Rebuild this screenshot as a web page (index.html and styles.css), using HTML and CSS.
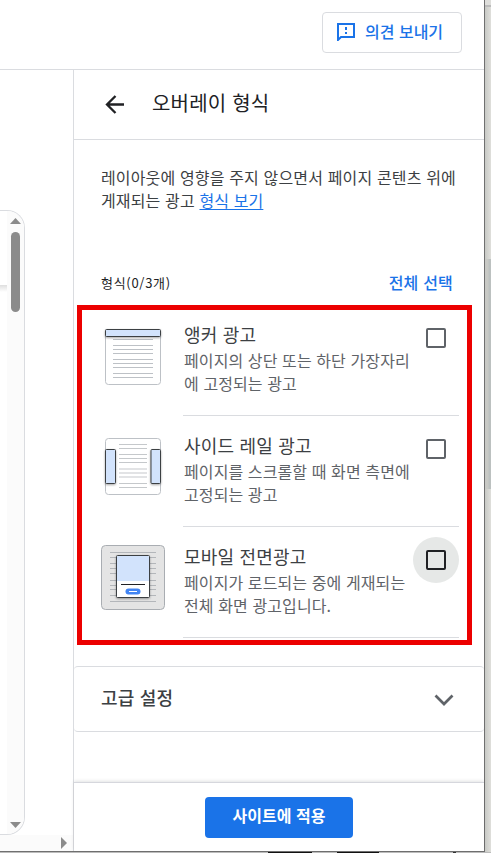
FILE: index.html
```html
<!DOCTYPE html>
<html lang="ko">
<head>
<meta charset="utf-8">
<title>오버레이 형식</title>
<link rel="stylesheet" href="styles.css">
</head>
<body>
<div class="screen">
  <div class="window">
    <header class="topbar">
      <button class="feedback">
        <svg width="18" height="18" viewBox="0 0 18 18"><path d="M1 17V1h16v13H4z" fill="none" stroke="#1a73e8" stroke-width="2"/><path d="M8 4h2v3H8zM8 9h2v2H8z" fill="#1a73e8"/></svg>
        <span>의견 보내기</span>
      </button>
    </header>
    <div class="main">
      <aside class="preview">
        <div class="preview-frame">
          <div class="page"><div class="page-bar"></div></div>
          <div class="scroll">
            <svg width="11" height="6" viewBox="0 0 11 6"><path d="M0 6 5.500 0 11 6z" fill="#8b8b8b"/></svg>
            <div class="thumb"></div>
            <svg class="down" width="11" height="6" viewBox="0 0 11 6"><path d="M0 0h11L5.500 6z" fill="#8b8b8b"/></svg>
          </div>
        </div>
        <div class="hscroll"><svg width="6" height="12" viewBox="0 0 6 12"><path d="M0 0l6 6-6 6z" fill="#8b8b8b"/></svg></div>
      </aside>
      <section class="panel">
        <div class="panel-head">
          <svg width="20" height="20" viewBox="0 0 20 20"><path d="M19 9.500H2M10.500 1 2 9.500l8.500 8.500" fill="none" stroke="#202124" stroke-width="2.300"/></svg>
          <h1>오버레이 형식</h1>
        </div>
        <p class="intro">레이아웃에 영향을 주지 않으면서 페이지 콘텐츠 위에<br>게재되는 광고 <a href="#">형식 보기</a></p>
        <div class="list-head"><span class="count">형식(0/3개)</span><span class="select-all">전체 선택</span></div>
        <div class="formats">
          <div class="format">
            <svg class="art" width="64" height="66" viewBox="0 0 64 66">
              <rect x="4.500" y="4.500" width="55" height="55" rx="3" fill="#fff" stroke="#bdc1c6"/>
              <path d="M12 14.500h40M12 20.500h40M12 24.500h40M12 28.500h40M12 34.500h40M12 38.500h40M12 42.500h40M12 48.500h40M12 52.500h40" stroke="#bdc1c6"/>
              <rect class="lift" x="4.500" y="4.500" width="55" height="7" rx="1" fill="#d2e3fc" stroke="#3c4043"/>
            </svg>
            <div class="copy"><h2>앵커 광고</h2><p>페이지의 상단 또는 하단 가장자리<br>에 고정되는 광고</p></div>
            <span class="state"><span class="box"></span></span>
          </div>
          <div class="format">
            <svg class="art" width="64" height="66" viewBox="0 0 64 66">
              <rect x="4.500" y="3.500" width="55" height="56" rx="3" fill="#fff" stroke="#bdc1c6"/>
              <path d="M18 9.500h28M18 13.500h28M18 19.500h28M18 23.500h28M18 27.500h28M18 34h28M18 38h28M18 42h28M18 48.500h28M18 52.500h28" stroke="#c5c8cb" stroke-width="1.200"/>
              <rect class="lift" x="4.500" y="14.500" width="10" height="34" rx="1" fill="#d2e3fc" stroke="#3c4043"/>
              <rect class="lift" x="50" y="14.500" width="9.500" height="34" rx="1" fill="#d2e3fc" stroke="#3c4043"/>
            </svg>
            <div class="copy"><h2>사이드 레일 광고</h2><p>페이지를 스크롤할 때 화면 측면에<br>고정되는 광고</p></div>
            <span class="state"><span class="box"></span></span>
          </div>
          <div class="format">
            <svg class="art" width="64" height="66" viewBox="0 0 64 66">
              <rect x=".5" y=".5" width="63" height="64" rx="4" fill="#e4e4e4" stroke="#a9adb2"/>
              <path d="M9 7.500h46M9 12.500h46M9 18.500h46M9 23.500h46M9 28.500h46M9 35.500h46M9 40.500h46M9 44.500h46M9 50.500h46M9 56.500h46" stroke="#b3b6ba"/>
              <rect class="lift" x="15.500" y="10.500" width="33" height="42" rx="1" fill="#fff" stroke="#3c4043"/>
              <path d="M16 11h32v25H16z" fill="#d2e3fc"/>
              <path d="M20 39.500h24" stroke="#202124"/>
              <rect x="24.500" y="43.500" width="15" height="6" rx="3" fill="#4285f4"/><path d="M28 46.500h8" stroke="#fff"/>
            </svg>
            <div class="copy"><h2>모바일 전면광고</h2><p>페이지가 로드되는 중에 게재되는<br>전체 화면 광고입니다.</p></div>
            <span class="state hovered"><span class="box"></span></span>
          </div>
        </div>
        <div class="advanced"><span>고급 설정</span><svg width="20" height="12" viewBox="0 0 20 12"><path d="M1.500 1.500 10 10l8.500-8.500" fill="none" stroke="#5f6368" stroke-width="2.700"/></svg></div>
        <footer class="actions"><button class="apply">사이트에 적용</button></footer>
      </section>
    </div>
  </div>
  <div class="backdrop"><div class="backdrop-top"></div><div class="backdrop-mid"></div><div class="backdrop-low"></div></div>
  <div class="under"><i class="dark wide"></i><i class="dark"></i><i class="tick"></i></div>
</div>
</body>
</html>
```
FILE: styles.css
```css
* { box-sizing: border-box; }
body, h1, h2, p { margin: 0; font-weight: 400; }
body {
  font-family: "Noto Sans CJK KR", sans-serif;
  color: #3c4043;
  background: #fff;
  overflow: hidden;
}
svg { display: block; flex: none; }
button { font: inherit; padding: 0; }
.screen {
  width: 491px;
  height: 853px;
  display: grid;
  grid-template-columns: 485px 6px;
  grid-template-rows: 852px 1px;
}
.window {
  display: flex;
  flex-direction: column;
  background: #fff;
  border-right: 1px solid #707070;
  border-bottom: 1px solid #707070;
  min-width: 0;
}
.topbar {
  height: 70px;
  flex: none;
  border-bottom: 1px solid #dadce0;
  padding: 12px 22px 0 0;
  display: flex;
  justify-content: flex-end;
}
.feedback {
  width: 140px;
  height: 41px;
  display: flex;
  align-items: center;
  gap: 10px;
  padding: 0 0 2px 14px;
  border: 1px solid #dadce0;
  border-radius: 4px;
  background: #fff;
  color: #1a73e8;
  font-size: 16px;
  font-weight: 500;
  white-space: nowrap;
}
.feedback span { padding-bottom: 2px; }
.main { flex: 1; display: flex; min-height: 0; }
.preview {
  width: 74px;
  flex: none;
  border-right: 1px solid #dadce0;
  padding-top: 140px;
  display: flex;
  flex-direction: column;
}
.preview-frame {
  width: 25px;
  height: 625px;
  display: flex;
  overflow: hidden;
  border: 1px solid #dadce0;
  border-left: 0;
  border-radius: 0 18px 18px 0;
}
.page { width: 7px; flex: none; padding-top: 74px; }
.page-bar { height: 7px; background: linear-gradient(#dedede, #fff); }
.scroll {
  width: 17px;
  background: #fbfbfb;
  display: flex;
  flex-direction: column;
  align-items: center;
  padding: 7px 0 6px;
}
.thumb { width: 9px; height: 80px; margin-top: 8px; border-radius: 5px; background: #8b8b8b; }
.down { margin-top: auto; }
.hscroll {
  flex: 1;
  background: #fbfbfb;
  display: flex;
  align-items: center;
  justify-content: flex-end;
  padding-right: 6px;
}
.panel { flex: 1; min-width: 0; display: flex; flex-direction: column; }
.panel-head {
  height: 70px;
  flex: none;
  border-bottom: 1px solid #dadce0;
  display: flex;
  align-items: center;
  gap: 27px;
  padding-left: 31px;
}
h1 { font-size: 20px; line-height: 28px; color: #202124; letter-spacing: .2px; padding-bottom: 4px; }
.intro {
  height: 130px;
  flex: none;
  padding: 26px 0 0 27px;
  font-size: 16px;
  line-height: 23px;
  letter-spacing: .15px;
  white-space: nowrap;
}
a { color: #1a73e8; text-underline-offset: 2px; letter-spacing: .1px; }
.list-head {
  height: 35px;
  flex: none;
  display: flex;
  justify-content: space-between;
  padding: 0 31px 0 27px;
  line-height: 26px;
}
.count { font-size: 13px; letter-spacing: .7px; color: #202124; }
.select-all { font-size: 16px; font-weight: 500; color: #1a73e8; line-height: 24px; letter-spacing: .2px; }
.formats {
  width: 395px;
  height: 340px;
  flex: none;
  margin-left: 3px;
  border: 5px solid #ec0000;
  overflow: hidden;
}
.format {
  height: 111px;
  margin: 0 9px 0 19px;
  display: grid;
  grid-template-columns: 82px 230px 1fr;
}
.format:first-child { height: 106px; }
.art { margin-top: 18px; }
.format:first-child .art { margin-top: 15px; }
.format:nth-child(2) .art { margin-top: 19px; }
.lift { filter: drop-shadow(0 1px 1px rgba(0, 0, 0, .35)); }
.copy {
  grid-column: 2 / 4;
  grid-row: 1;
  border-bottom: 1px solid #dadce0;
  padding: 16px 0 0 1px;
  white-space: nowrap;
}
.format:first-child .copy { padding-top: 11px; }
h2 { font-size: 18px; line-height: 26px; letter-spacing: .2px; margin-bottom: 2px; }
.copy p { font-size: 16px; line-height: 23px; letter-spacing: .1px; color: #5f6368; }
.state {
  grid-column: 3;
  grid-row: 1;
  width: 46px;
  height: 46px;
  margin-top: 10px;
  border-radius: 50%;
  display: flex;
  align-items: center;
  justify-content: center;
}
.format:first-child .state { margin-top: 5px; }
.hovered { background: #e6e8e7; }
.box { width: 20px; height: 20px; border: 2px solid #5f6368; border-radius: 2px; }
.hovered .box { border-color: #202124; }
.advanced {
  height: 66px;
  flex: none;
  margin-top: 21px;
  padding: 0 30px 0 27px;
  border: 1px solid #dadce0;
  border-width: 1px 0;
  border-radius: 4px;
  display: flex;
  align-items: center;
  justify-content: space-between;
  font-size: 18px;
  font-weight: 500;
  letter-spacing: .2px;
}
.advanced span { padding-bottom: 5px; }
.advanced svg { margin-top: 1px; }
.actions {
  height: 69px;
  margin-top: auto;
  border-top: 1px solid #d6d7dd;
  box-shadow: 0 -1px 3px rgba(60, 64, 67, .15);
  padding-top: 14px;
  display: flex;
  justify-content: center;
}
.apply {
  width: 148px;
  height: 41px;
  border: 0;
  border-radius: 4px;
  background: #1a73e8;
  color: #fff;
  font-size: 16px;
  font-weight: 700;
  padding-bottom: 5px;
}
.backdrop { display: flex; flex-direction: column; background: linear-gradient(90deg, #c8c9c5, #dfdfdb); }
.backdrop-top { height: 7px; background: #dededb; border-bottom: 2px solid #bbb; }
.backdrop-mid { height: 252px; }
.backdrop-low { height: 230px; background: linear-gradient(90deg, #c8c9c5 0 3px, #bcc1c0 4px); }
.under { grid-column: 1 / 3; display: flex; background: #bcbcbc; padding-left: 268px; }
.dark { width: 42px; background: #111; margin-right: 27px; }
.wide { width: 44px; margin-right: 25px; }
.tick { width: 3px; background: #333; margin-left: 47px; }
```
